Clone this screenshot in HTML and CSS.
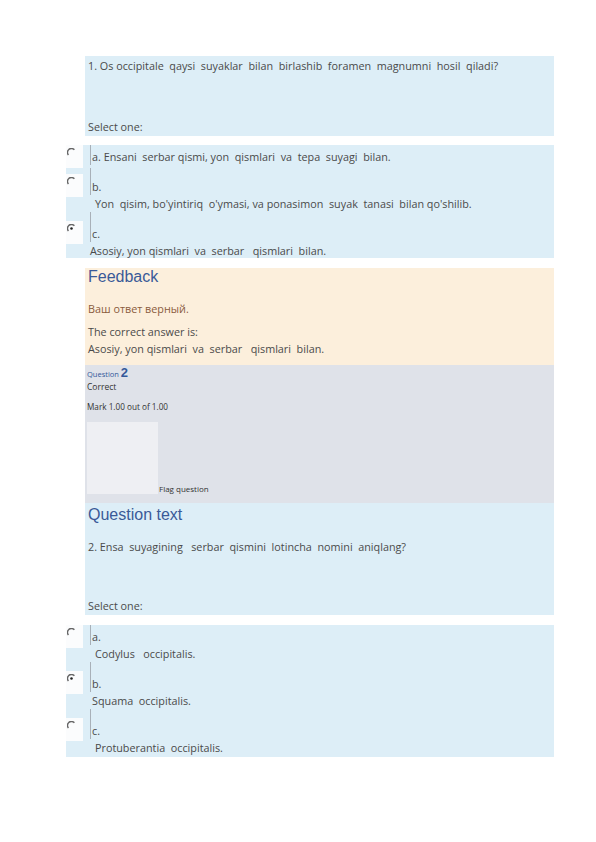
FILE: index.html
```html
<!DOCTYPE html>
<html lang="uz">
<head>
<meta charset="utf-8">
<title>Quiz</title>
<link rel="stylesheet" href="styles.css">
</head>
<body>
<div class="page">
  <div class="qbox q1">
    <p class="qtext">1. Os occipitale&nbsp; qaysi&nbsp; suyaklar&nbsp; bilan&nbsp; birlashib&nbsp; foramen&nbsp; magnumni&nbsp; hosil&nbsp; qiladi?</p>
    <p class="select">Select one:</p>
  </div>

  <div class="answer a1">
    <div class="opt first">
      <div class="radio-cell"><svg class="radio" viewBox="0 0 10 10"><path d="M8.2 2 A4.2 4.2 0 0 0 1.6 7.8" fill="none" stroke="#666" stroke-width="1.6"/></svg></div>
      <div class="body"><div class="letter">a. Ensani&nbsp; serbar qismi, yon&nbsp; qismlari&nbsp; va&nbsp; tepa&nbsp; suyagi&nbsp; bilan.</div></div>
    </div>
    <div class="opt tight">
      <div class="radio-cell"><svg class="radio" viewBox="0 0 10 10"><path d="M8.2 2 A4.2 4.2 0 0 0 1.6 7.8" fill="none" stroke="#666" stroke-width="1.6"/></svg></div>
      <div class="body"><div class="letter">b.</div><div class="atext ind5">Yon&nbsp; qisim, bo'yintiriq&nbsp; o'ymasi, va ponasimon&nbsp; suyak&nbsp; tanasi&nbsp; bilan qo'shilib.</div></div>
    </div>
    <div class="opt">
      <div class="radio-cell"><svg class="radio" viewBox="0 0 10 10"><path d="M8.2 2 A4.2 4.2 0 0 0 1.6 7.8" fill="none" stroke="#666" stroke-width="1.6"/><circle cx="5" cy="5" r="1.4" fill="#222"/></svg></div>
      <div class="body"><div class="letter">c.</div><div class="atext">Asosiy, yon qismlari&nbsp; va&nbsp; serbar&nbsp;&nbsp; qismlari&nbsp; bilan.</div></div>
    </div>
  </div>

  <div class="feedback">
    <h3 class="heading">Feedback</h3>
    <p class="fb-ok">Ваш ответ верный.</p>
    <p class="fb-line">The correct answer is:<br>Asosiy, yon qismlari&nbsp; va&nbsp; serbar&nbsp;&nbsp; qismlari&nbsp; bilan.</p>
  </div>

  <div class="info">
    <div class="qno">Question <span class="num">2</span></div>
    <div class="state">Correct</div>
    <div class="mark">Mark 1.00 out of 1.00</div>
    <div class="flag-row">
      <div class="flag-box"></div>
      <span class="flag-text">Flag question</span>
    </div>
  </div>

  <div class="qbox q2">
    <h3 class="heading">Question text</h3>
    <p class="qtext2">2. Ensa&nbsp; suyagining&nbsp;&nbsp; serbar&nbsp; qismini&nbsp; lotincha&nbsp; nomini&nbsp; aniqlang?</p>
    <p class="select2">Select one:</p>
  </div>

  <div class="answer a2">
    <div class="opt first">
      <div class="radio-cell"><svg class="radio" viewBox="0 0 10 10"><path d="M8.2 2 A4.2 4.2 0 0 0 1.6 7.8" fill="none" stroke="#666" stroke-width="1.6"/></svg></div>
      <div class="body"><div class="letter">a.</div><div class="atext ind5">Codylus&nbsp;&nbsp; occipitalis.</div></div>
    </div>
    <div class="opt">
      <div class="radio-cell"><svg class="radio" viewBox="0 0 10 10"><path d="M8.2 2 A4.2 4.2 0 0 0 1.6 7.8" fill="none" stroke="#666" stroke-width="1.6"/><circle cx="5" cy="5" r="1.4" fill="#222"/></svg></div>
      <div class="body"><div class="letter">b.</div><div class="atext ind2">Squama&nbsp; occipitalis.</div></div>
    </div>
    <div class="opt">
      <div class="radio-cell"><svg class="radio" viewBox="0 0 10 10"><path d="M8.2 2 A4.2 4.2 0 0 0 1.6 7.8" fill="none" stroke="#666" stroke-width="1.6"/></svg></div>
      <div class="body"><div class="letter">c.</div><div class="atext ind5">Protuberantia&nbsp; occipitalis.</div></div>
    </div>
  </div>
</div>
</body>
</html>
```
FILE: styles.css
```css
html, body { margin: 0; padding: 0; background: #ffffff; }
body {
  font-family: "Open Sans", "Noto Sans", sans-serif;
  font-size: 10.8px;
  color: #4a4a4a;
}
p, h3 { margin: 0; }
.page {
  width: 488px;
  margin-left: 66px;
  padding-top: 56px;
}
.qbox {
  margin-left: 19px;
  background: #ddeef7;
  padding: 0 3px;
}
.q1 { height: 80px; display: flex; flex-direction: column; }
.qtext { line-height: 16px; padding-top: 2px; }
.select { line-height: 16px; margin-top: auto; padding-bottom: 1px; }

.answer {
  background: #ddeef7;
  margin-top: 9px;
  overflow: hidden;
}
.a1 { height: 113px; }
.opt { display: flex; padding-top: 4px; }
.opt + .opt { padding-top: 0; }
.radio-cell {
  width: 16px;
  height: 20px;
  background: #fbfcfd;
  margin-left: -3px;
  margin-right: 7px;
  margin-top: -4px;
  display: flex;
  align-items: flex-start;
  padding-top: 3px;
  padding-left: 4px;
  box-sizing: content-box;
}
.opt + .opt .radio-cell { margin-top: 9px; }
.opt.tight .radio-cell { margin-top: 6px; }
.radio { width: 9px; height: 9px; display: block; }
.body { flex: 1; }
.letter {
  border-left: 1px solid #a8b0b8;
  line-height: 16px;
  padding-left: 1px;
}
.opt + .opt .letter { padding-top: 14px; }
.opt.tight .letter { padding-top: 11px; }
.first .letter { margin-top: -4px; padding-top: 4px; }
.atext { line-height: 17px; }
.ind5 { padding-left: 5px; }
.ind2 { padding-left: 2px; }

.feedback {
  margin-left: 19px;
  margin-top: 10px;
  background: #fcefdc;
  height: 97px;
  padding: 0 3px;
  box-sizing: border-box;
}
.heading {
  font-family: "Liberation Sans", Arial, sans-serif;
  font-weight: normal;
  font-size: 16px;
  line-height: 18px;
  color: #3a5a98;
}
.fb-ok { color: #8a5b3c; line-height: 16px; margin-top: 15px; }
.fb-line { line-height: 17px; margin-top: 6px; }

.info {
  margin-left: 19px;
  background: #dfe2e9;
  height: 138px;
  padding: 0 2px;
  box-sizing: border-box;
  color: #333;
}
.qno { font-size: 7.5px; color: #34589a; line-height: 14px; padding-top: 1px; }
.num { font-family: "Liberation Sans", Arial, sans-serif; font-weight: bold; font-size: 13px; }
.state { font-size: 8.5px; line-height: 12px; }
.mark { font-size: 8.2px; line-height: 12px; margin-top: 8px; }
.flag-row { display: flex; align-items: flex-end; margin-top: 9px; }
.flag-box { width: 71px; height: 72px; background: #eeeff3; }
.flag-text { font-size: 8px; line-height: 10px; margin-left: 1px; }

.q2 { height: 112px; display: flex; flex-direction: column; }
.q2 .heading { padding-top: 3px; }
.qtext2 { line-height: 16px; margin-top: 15px; }
.select2 { line-height: 16px; margin-top: auto; padding-bottom: 1px; }

.a2 { margin-top: 10px; height: 132px; }
```
